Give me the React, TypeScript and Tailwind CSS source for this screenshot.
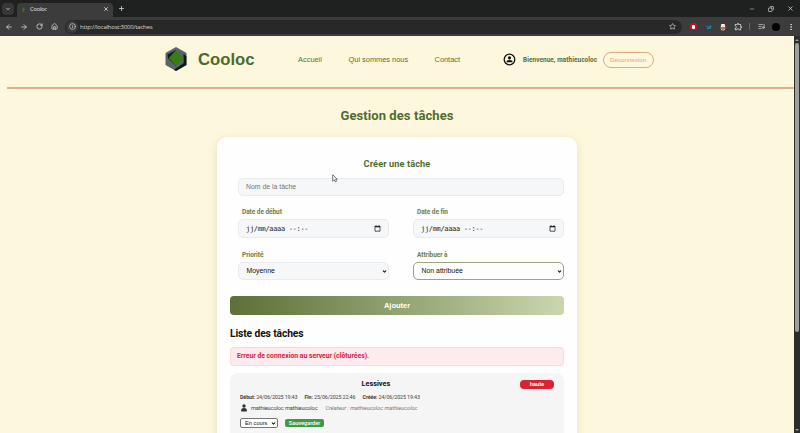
import type { ReactNode } from "react";
import {
  ArrowLeft, ArrowRight, RotateCw, House, Info, Star, ListMusic,
  EllipsisVertical, Minus, X, Plus, ChevronDown, Copy,
} from "lucide-react";
import { MdOutlineExtension } from "react-icons/md";

const din = "font-['Roboto','Noto_Sans',sans-serif]";

function TabStrip() {
  return (
    <div className="flex h-[17px] items-center bg-[#1f2020] pl-[2px] text-[#e3e3e3]">
      <div className="flex h-[12px] w-[12px] items-center justify-center rounded-[4px] bg-[#373737]">
        <ChevronDown size={6} strokeWidth={3} />
      </div>
      <div className="ml-[3px] flex h-[14px] w-[96px] items-center self-end rounded-t-[4px] bg-[#3c3c3c] pl-[4px] pr-[4px]">
        <svg width="5" height="6" viewBox="0 0 5 6"><path d="M2 .5 4.2 2 2.6 4.5.8 5.5Z" fill="#397a18" /></svg>
        <span className="mb-[3px] ml-[4px] flex-1 font-['Open_Sans',sans-serif] text-[5.8px] leading-[10px] tracking-[-0.25px]">Cooloc</span>
        <X size={6} strokeWidth={3} className="mb-[3px]" />
      </div>
      <Plus size={7} strokeWidth={2.5} className="ml-[5px]" />
      <div className="ml-auto flex items-center pr-[6px]">
        <Minus size={6} strokeWidth={2} />
        <Copy size={6} strokeWidth={2.5} className="ml-[13px] -scale-x-100" />
        <X size={7} strokeWidth={2.5} className="ml-[13px]" />
      </div>
    </div>
  );
}

function AddressBar() {
  return (
    <div className="flex h-[19px] items-center bg-[#3c3c3c] pl-[5px] text-[#d8d8d8]">
      <ArrowLeft size={8} strokeWidth={2.3} />
      <ArrowRight size={8} strokeWidth={2.3} className="ml-[7px]" />
      <RotateCw size={7} strokeWidth={2.7} className="ml-[8px]" />
      <House size={7} strokeWidth={2.5} className="ml-[8px]" />
      <div className="ml-[7px] flex h-[14px] w-[617px] items-center rounded-full bg-[#282828] pl-[1px] pr-[6px]">
        <div className="flex h-[12px] w-[12px] items-center justify-center rounded-full bg-[#3c3c3c]">
          <Info size={7} strokeWidth={2.3} />
        </div>
        <span className="ml-[2px] flex-1 font-['Open_Sans',sans-serif] text-[6px] leading-[12px] tracking-[-0.22px]">http://localhost:3000/taches</span>
        <Star size={7} strokeWidth={2.3} />
      </div>
      <div className="ml-[8px] flex h-[7px] w-[7px] items-center justify-center rounded-full bg-[#d80e25]">
        <div className="h-[4px] w-[3px] rounded-[1px] bg-white" />
      </div>
      <svg className="ml-[8px]" width="8" height="8" viewBox="0 0 8 8">
        <circle cx="4" cy="4" r="3.7" fill="#204653" />
        <path d="M1.3 3.5q1-1 1.5.3t1.5.1M2 5.8q2.8.5 2.5-2.4M5 2q1.7 1.5.4 4" fill="none" stroke="#4c9eb8" strokeWidth=".7" />
      </svg>
      <svg className="ml-[7px]" width="6" height="8" viewBox="0 0 6 8">
        <rect x=".8" y="1" width="4.4" height="6.5" rx="2" fill="#f0e4da" />
        <path d="M1 4h4v1.5q-2 3-4 0Z" fill="#c86c3b" /><path d="M1.4 1.6h3.2" stroke="#fff" />
      </svg>
      <MdOutlineExtension size={9} className="ml-[8px]" />
      <div className="ml-[6px] h-[7px] w-px bg-[#666]" />
      <ListMusic size={7} strokeWidth={2.3} className="ml-[8px]" />
      <div className="ml-[7px] h-[8px] w-[8px] rounded-full bg-black" />
      <EllipsisVertical size={8} strokeWidth={2.5} className="ml-auto mr-[5px]" />
    </div>
  );
}

function Logo() {
  return (
    <svg width="22" height="24" viewBox="0 0 22 24">
      <path d="M11 0 21.5 6v12L11 24 .5 18V6Z" fill="#56666b" />
      <path d="M2.5 7.5 11 3v16L3 11.5Z" fill="#15181b" />
      <path d="M18.5 7 21.4 9v9L11 24 9 22.8 18.7 16Z" fill="#15181b" />
      <path d="M10.5 3.5 18.7 11 11 19 3.5 11.3Z" fill="#397c12" />
    </svg>
  );
}

function SiteHeader() {
  return (
    <header className="ml-[7px] flex h-[53px] items-start border-b-2 border-b-[#e2b18b] pl-[157.5px] text-[#55703a]">
      <div className="pt-[11px]"><Logo /></div>
      <div className="ml-[11.5px] mt-[13px] text-[16.7px] font-bold leading-[22px] text-[#4b6b2c]">Cooloc</div>
      <nav className="mt-[18px] flex text-[7.4px] leading-[12px]">
        <a className="ml-[43.5px] w-[50.5px]">Accueil</a>
        <a className="w-[86px]">Qui sommes nous</a>
        <a className="w-[68px]">Contact</a>
      </nav>
      <svg className="mt-[17px]" width="13" height="13" viewBox="0 0 13 13">
        <circle cx="6.5" cy="6.5" r="5.3" fill="none" stroke="#111" strokeWidth="1.3" />
        <circle cx="6.5" cy="4.8" r="1.6" fill="#111" /><path d="M3.4 9.2q0-2.3 3.1-2.3t3.1 2.3Z" fill="#111" />
      </svg>
      <span className={`${din} ml-[7.5px] mt-[18px] w-[79.5px] whitespace-nowrap text-[6.4px] font-bold leading-[12px] tracking-[0.08px]`}>Bienvenue, mathieucoloc</span>
      <button className="mt-[16px] flex h-[16px] w-[51px] items-center justify-center rounded-full border-[1.2px] border-[#d8ab83] text-[6.2px] text-[#d8a67c]">Déconnexion</button>
    </header>
  );
}

function Field({ label, children }: { label: string; children: ReactNode }) {
  return (
    <div className="flex w-[151px] flex-col">
      <label className={`${din} h-[12px] pl-[4px] text-[6.5px] font-bold leading-[10px] tracking-[-0.05px] text-[#6b7f4e]`}>{label}</label>
      {children}
    </div>
  );
}

function DateBox() {
  return (
    <div className="flex h-[19px] items-center justify-between rounded-[5px] border border-[#e9ebed] bg-[#f6f7f9] pl-[7px] pr-[7px] text-[#222]">
      <span className="pt-px font-['DejaVu_Sans_Mono',monospace] text-[7px] tracking-[-0.33px]">jj/mm/aaaa --:--</span>
      <svg width="7" height="7" viewBox="0 0 7 7"><path d="M1 1.6h5v4.6H1Z" fill="none" stroke="#111" strokeWidth=".7" /><path d="M.7 1.7h5.6M2 .3v1M5 .3v1" stroke="#111" /></svg>
    </div>
  );
}

function SelectBox({ value, active = false }: { value: string; active?: boolean }) {
  return (
    <div className={`flex h-[18px] items-center justify-between rounded-[5px] border pl-[7.5px] pr-[1px] text-[6.9px] text-[#111] ${active ? "border-[#97a67b] bg-white" : "border-[#e9ebed] bg-[#f6f7f9]"}`}>
      <span>{value}</span>
      <ChevronDown size={5} strokeWidth={5} />
    </div>
  );
}

function TaskForm() {
  return (
    <section>
      <h2 className={`${din} pt-[20px] text-center text-[9.2px] font-bold leading-[14px] tracking-[0.1px] text-[#506c2f]`}>Créer une tâche</h2>
      <div className="ml-[8px] mt-[7px] flex h-[18px] items-center rounded-[5px] border border-[#e9ebed] bg-[#f6f7f9] pl-[7px] text-[6.9px] text-[#757575]">Nom de la tâche</div>
      <div className="ml-[8px] mt-[11px] flex justify-between">
        <Field label="Date de début"><DateBox /></Field>
        <Field label="Date de fin"><DateBox /></Field>
      </div>
      <div className="ml-[8px] mt-[12px] flex justify-between">
        <Field label="Priorité"><SelectBox value="Moyenne" /></Field>
        <Field label="Attribuer à"><SelectBox value="Non attribuée" active /></Field>
      </div>
      <button className="mt-[16px] flex h-[19px] w-full items-center justify-center rounded-[4px] bg-gradient-to-r from-[#5d7037] to-[#cbd7ae] text-[7.5px] font-bold text-white">Ajouter</button>
    </section>
  );
}

function TaskList() {
  return (
    <section>
      <h2 className={`${din} mt-[12px] text-[10.3px] font-bold leading-[14px] tracking-[-0.12px] text-[#111]`}>Liste des tâches</h2>
      <div className={`${din} mt-[6px] flex h-[19px] items-center rounded-[4px] border border-[#f8d9dc] bg-[#fdebed] pl-[6px] text-[6.8px] font-bold text-[#d8213b]`}>Erreur de connexion au serveur (clôturées).</div>
      <article className={`${din} mt-[7px] h-[70px] rounded-[8px] bg-[#f5f5f5] px-[10px] pt-[5px] text-[#444]`}>
        <div className="flex h-[12px] items-center justify-between pl-[121.5px]">
          <h3 className="pt-px text-[7.3px] font-bold text-[#111]">Lessives</h3>
          <span className="flex h-[9px] w-[34px] items-center justify-center rounded-[4px] bg-[#d92236] text-[5.7px] font-bold text-white">haute</span>
        </div>
        <div className="mt-[2px] flex h-[10px] items-center whitespace-nowrap text-[5.4px] tracking-[-0.14px]">
          <span className="w-[64.5px]"><b>Début:</b> 24/06/2025 19:43</span>
          <span className="w-[58px]"><b>Fin:</b> 25/06/2025 22:46</span>
          <span><b>Créée:</b> 24/06/2025 19:43</span>
        </div>
        <div className="mt-px flex h-[10px] items-center whitespace-nowrap text-[5.7px] tracking-[-0.15px]">
          <svg className="mr-[3px]" width="8" height="8" viewBox="0 0 8 8"><circle cx="4" cy="2" r="1.7" fill="#333" /><path d="M1.2 7.5V6q0-2 2.8-2t2.8 2v1.5Z" fill="#333" /></svg>
          <span className="w-[74.5px]">mathieucoloc mathieucoloc</span>
          <span className="italic tracking-[-0.04px] text-[#777]">Créateur : mathieucoloc mathieucoloc</span>
        </div>
        <div className="mt-[5px] flex items-center">
          <div className="flex h-[10px] w-[38px] items-center justify-between rounded-[2px] border border-[#777] bg-white pl-[4px] pr-px font-['Liberation_Sans',sans-serif] text-[5.7px] text-[#111]"><span>En cours</span><ChevronDown size={5} strokeWidth={5} /></div>
          <button className="ml-[7px] flex h-[8px] w-[39px] items-center justify-center rounded-[2px] bg-[#3f9b43] text-[5.6px] font-medium text-white">Sauvegarder</button>
        </div>
      </article>
    </section>
  );
}

function ScrollBar() {
  return (
    <div className="flex w-[6px] flex-col items-center bg-[#2b2c2c] pb-[2px] pt-[3px]">
      <div className="h-0 w-0 border-x-[2px] border-b-[2px] border-x-transparent border-b-[#9f9f9f]" />
      <div className="mt-[2px] h-[289px] w-[4px] rounded-full bg-[#9d9e9e]" />
      <div className="mt-auto h-0 w-0 border-x-[2px] border-t-[2px] border-x-transparent border-t-[#9f9f9f]" />
    </div>
  );
}

export default function App() {
  return (
    <div className="relative flex h-[433px] w-[800px] flex-col overflow-hidden font-['Liberation_Sans',sans-serif]">
      <TabStrip />
      <AddressBar />
      <div className="flex min-h-0 flex-1">
        <main className="flex-1 overflow-hidden bg-[#fdf7dd]">
          <SiteHeader />
          <h1 className={`${din} mt-[17px] text-center text-[13px] font-bold leading-[19px] tracking-[0.08px] text-[#506c2f]`}>Gestion des tâches</h1>
          <div className="mx-auto mt-[12px] h-[320px] w-[360px] rounded-[10px] bg-[#fefefe] px-[13px] shadow-[0_2px_8px_rgba(90,110,50,0.14)]">
            <TaskForm />
            <TaskList />
          </div>
        </main>
        <ScrollBar />
      </div>
      <svg className="absolute left-[332px] top-[174px]" width="6" height="9" viewBox="0 0 6 9"><path d="M.7.7v6.5l1.6-1.3 1 2 1.2-.6-.9-2h1.7Z" fill="#fff" stroke="#555" strokeWidth=".8" /></svg>
    </div>
  );
}
